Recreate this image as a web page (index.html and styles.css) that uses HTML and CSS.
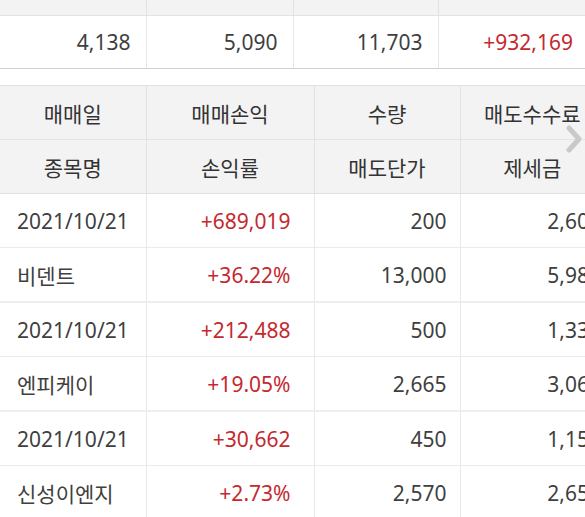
FILE: index.html
```html
<!DOCTYPE html>
<html lang="ko">
<head>
<meta charset="utf-8">
<link rel="stylesheet" href="styles.css">
</head>
<body>
<div class="page">
  <table class="summary">
    <colgroup><col class="s1"><col class="s2"><col class="s3"><col class="s4"></colgroup>
    <thead>
      <tr class="strip"><th></th><th></th><th></th><th></th></tr>
    </thead>
    <tbody>
      <tr>
        <td>4,138</td><td>5,090</td><td>11,703</td><td class="up">+932,169</td>
      </tr>
    </tbody>
  </table>

  <div class="list-wrap">
    <table class="list">
      <colgroup><col class="c1"><col class="c2"><col class="c3"><col class="c4"></colgroup>
      <thead>
        <tr><th>매매일</th><th>매매손익</th><th>수량</th><th>매도수수료</th></tr>
        <tr class="h2"><th>종목명</th><th>손익률</th><th>매도단가</th><th>제세금</th></tr>
      </thead>
      <tbody>
        <tr class="first"><td class="l">2021/10/21</td><td class="up">+689,019</td><td>200</td><td>2,600</td></tr>
        <tr class="second"><td class="l">비덴트</td><td class="up">+36.22%</td><td>13,000</td><td>5,980</td></tr>
        <tr class="first"><td class="l">2021/10/21</td><td class="up">+212,488</td><td>500</td><td>1,333</td></tr>
        <tr class="second"><td class="l">엔피케이</td><td class="up">+19.05%</td><td>2,665</td><td>3,064</td></tr>
        <tr class="first"><td class="l">2021/10/21</td><td class="up">+30,662</td><td>450</td><td>1,157</td></tr>
        <tr class="second"><td class="l">신성이엔지</td><td class="up">+2.73%</td><td>2,570</td><td>2,659</td></tr>
      </tbody>
    </table>
    <svg class="chev" width="16" height="28" viewBox="0 0 16 28" aria-hidden="true">
      <polyline points="3,3 13,14 3,25" fill="none" stroke="#c9c9c9" stroke-width="5" stroke-linecap="round" stroke-linejoin="round"/>
    </svg>
  </div>
</div>
</body>
</html>
```

FILE: styles.css
```css
html, body {
  margin: 0;
  padding: 0;
  background: #ffffff;
}
body {
  font-family: "Noto Sans", "Noto Sans CJK KR", sans-serif;
  color: #3f3f3f;
  width: 585px;
  height: 517px;
  overflow: hidden;
}
.page {
  width: 585px;
  overflow: hidden;
}
table {
  border-collapse: collapse;
  table-layout: fixed;
}
.summary {
  width: 588px;
}
.summary .s1 { width: 146px; }
.summary .s2 { width: 147px; }
.summary .s3 { width: 145px; }
.summary .s4 { width: 150px; }
.summary .strip th {
  height: 15px;
  padding: 0;
  background: #f3f3f3;
  border-left: 1px solid #e2e2e2;
  border-bottom: 1px solid #e2e2e2;
}
.summary .strip th:first-child { border-left: none; }
.summary td {
  height: 52px;
  padding: 0 15px 0 0;
  text-align: right;
  font-size: 21px;
  border-left: 1px solid #e6e6e6;
  border-bottom: 1px solid #cfcfcf;
}
.summary td:first-child { border-left: none; }
.up { color: #c5292f; }

.list-wrap {
  position: relative;
  margin-top: 16px;
  width: 585px;
  overflow: hidden;
}
.list {
  width: 614px;
}
.list .c1 { width: 146px; }
.list .c2 { width: 168px; }
.list .c3 { width: 146px; }
.list .c4 { width: 154px; }
.list th {
  height: 53px;
  padding: 0;
  background: #f3f3f3;
  font-weight: normal;
  font-size: 21px;
  color: #333333;
  text-align: center;
  border-top: 1px solid #e0e0e0;
  border-left: 1px solid #e2e2e2;
  white-space: nowrap;
}
.list th:last-child { padding-right: 10px; }
.list th:first-child, .list td:first-child { border-left: none; }
.list tr.h2 th { border-top: 1px solid #e4e4e4; }
.list td {
  height: 53px;
  padding: 0 13px 0 0;
  text-align: right;
  font-size: 21px;
  white-space: nowrap;
  border-left: 1px solid #e8e8e8;
  border-top: 1px solid #ebebeb;
}
.list td.up { padding-right: 23px; }
.list td.l {
  text-align: left;
  padding: 0 0 0 17px;
}
.list tbody tr.first td { border-top: 2px solid #eeeeee; }
.list tbody tr:first-child td { border-top: 1px solid #e0e0e0; }
.chev {
  position: absolute;
  right: 3px;
  top: 40px;
}
```
